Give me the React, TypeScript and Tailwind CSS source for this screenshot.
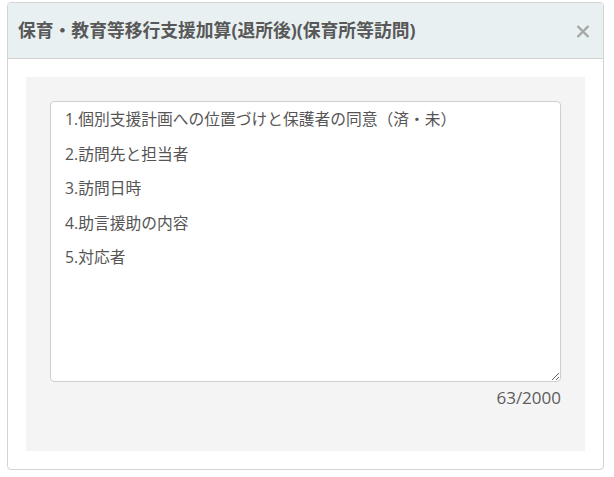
import { useState } from "react";

const INITIAL =
  "1.個別支援計画への位置づけと保護者の同意（済・未）\n\n2.訪問先と担当者\n\n3.訪問日時\n\n4.助言援助の内容\n\n5.対応者";

export default function App() {
  const [text, setText] = useState(INITIAL);

  return (
    <div
      className="w-[614px] h-[477px] bg-white pt-[2px] pl-[7px]"
      style={{ fontFamily: '"Open Sans", "Noto Sans CJK JP", sans-serif' }}
    >
      <div className="w-[597px] h-[468px] rounded-[4px] border border-[#d3d3d3] bg-white overflow-hidden flex flex-col">
        {/* Header */}
        <div className="h-[56px] shrink-0 flex items-center justify-between pl-[10px] pr-[12px] bg-[#e8f0f2] border-b border-[#d3d3d3]">
          <h2 className="text-[17.8px] font-bold text-[#585858]">
            保育・教育等移行支援加算(退所後)(保育所等訪問)
          </h2>
          <button className="w-[16px] h-[16px] flex items-center justify-center mt-[1px]">
            <svg width="14" height="13" viewBox="0 0 14 13">
              <path d="M1.5 1 L12.5 12 M12.5 1 L1.5 12" stroke="#a6a6a6" strokeWidth="2.4" strokeLinecap="butt" />
            </svg>
          </button>
        </div>

        {/* Body */}
        <div className="flex-1 px-[18px] pt-[18px] pb-[18px]">
          <div className="w-[559px] h-[374px] bg-[#f4f4f4] px-[24px] pt-[24px]">
            <textarea
              value={text}
              onChange={(e) => setText(e.target.value)}
              maxLength={2000}
              className="block w-[511px] h-[281px] rounded-[4px] border border-[#cfcfcf] bg-white px-[14px] pt-[9px] text-[15.75px] leading-[17.25px] text-[#555] outline-none"
            />
            <div className="text-right text-[17px] leading-[23px] text-[#5c5c5c] mt-[4px]">{text.length}/2000</div>
          </div>
        </div>
      </div>
    </div>
  );
}
